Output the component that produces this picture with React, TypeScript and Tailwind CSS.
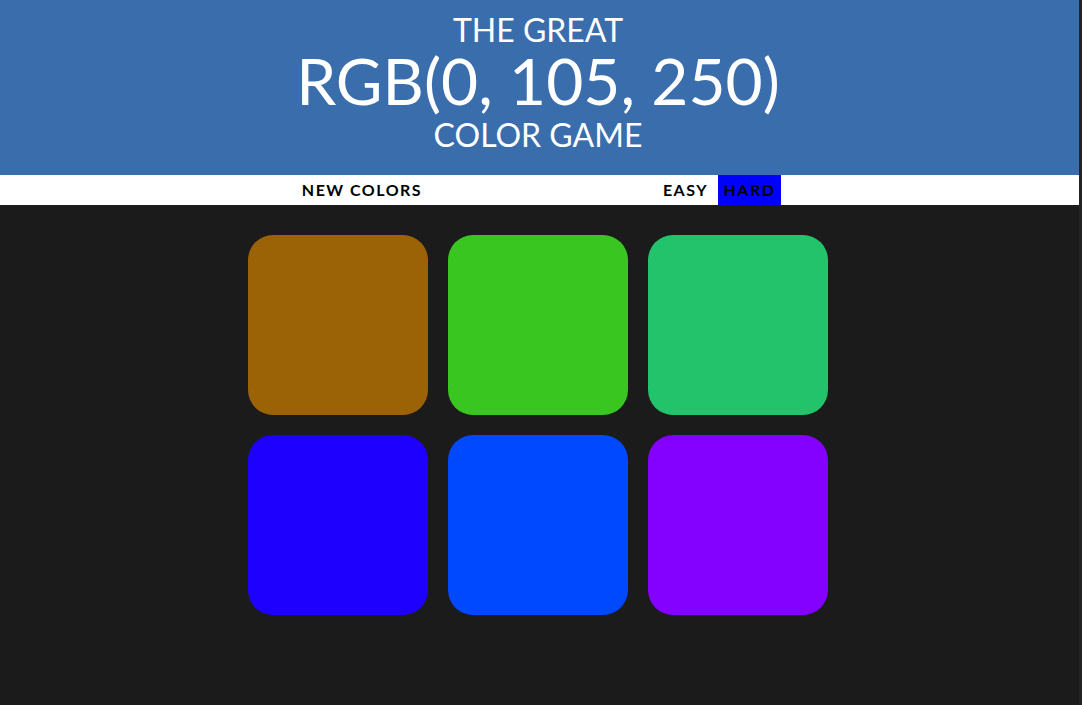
const squares = [
  '#9c6306',
  '#3ac620',
  '#22c36a',
  '#1e00ff',
  '#0049ff',
  '#8400ff',
];

export default function App() {
  return (
    <div className="flex h-[705px] w-[1082px] bg-[#1b1b1b] font-['Lato',sans-serif]">
      <div className="flex w-[1079px] flex-col">
        <h1 className="bg-[#3a6dac] pt-[14px] pb-[24px] pr-[3px] text-center font-normal text-white">
          <div className="text-[32px] leading-none">THE GREAT</div>
          <div className="mt-[3px] text-[64px] leading-none">RGB(0, 105, 250)</div>
          <div className="mt-[6px] text-[32px] leading-none">COLOR GAME</div>
        </h1>

        <div className="flex h-[30px] justify-center bg-white pr-[3px] text-[16px] font-bold tracking-[1.5px] text-black">
          <button className="w-[134px]">NEW COLORS</button>
          <span className="w-[224px]" />
          <button className="w-[65px]">EASY</button>
          <button className="w-[63px] bg-[#0000ff]">HARD</button>
        </div>

        <div className="flex justify-center pr-[3px]">
          <div className="mt-5 flex w-[600px] flex-wrap">
            {squares.map((c) => (
              <div
                key={c}
                className="m-[10px] h-[180px] w-[180px] rounded-[25px]"
                style={{ backgroundColor: c }}
              />
            ))}
          </div>
        </div>
      </div>
      <div className="w-[3px] bg-[#232326]" />
    </div>
  );
}
